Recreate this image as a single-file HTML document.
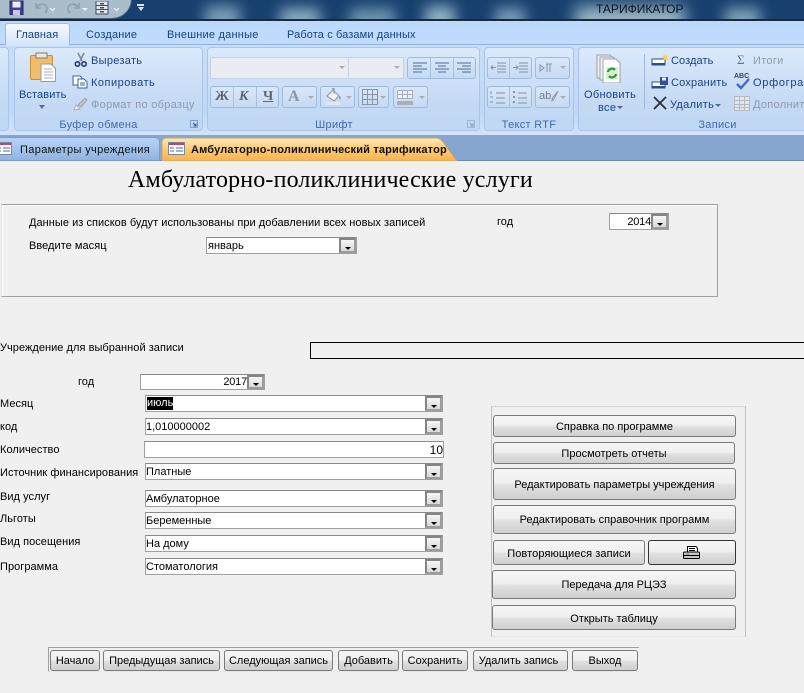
<!DOCTYPE html>
<html><head><meta charset="utf-8"><style>
html,body{margin:0;padding:0}
body{width:804px;height:693px;overflow:hidden;position:relative;background:#f0f0f0;font-family:"Liberation Sans",sans-serif;font-size:11px;color:#000}
div,span.a,svg{position:absolute}
.t{white-space:nowrap;line-height:14px;height:14px}
.r{color:#15428b;font-size:11px;letter-spacing:.3px}
.d{color:#a0a8b5}
.g{top:47px;height:84px;border:1px solid #a9c6ea;border-radius:4px;box-sizing:border-box;background:linear-gradient(#dbe9fb,#c4d9f4 70%,#c4d9f4);overflow:hidden}
.g:after{content:"";position:absolute;left:0;right:0;bottom:0;height:15px;background:#c1d8f4}
.gl{top:118px;text-align:center;color:#3e6aaa;font-size:11px;line-height:14px;letter-spacing:.3px}
.f{font-size:11px;letter-spacing:.04px}
.c{background:#fff;border:1px solid #a0a0a0;border-top-color:#8a8a8a;box-sizing:border-box}
.c .b,.b{position:absolute;box-sizing:border-box;background:linear-gradient(#f6f6f6,#d8d8d8);border:2px solid #9c9c9c;border-top-color:#858585;border-left-color:#858585}
.b:after{content:"";position:absolute;left:50%;top:50%;margin:1px 0 0 -3px;border:3px solid transparent;border-top:3px solid #000;border-bottom:0}
.c .v{position:absolute;left:0;top:1px;white-space:nowrap;line-height:14px;font-size:11px}
.p{box-sizing:border-box;border:1px solid #7a7a7a;border-radius:3px;background:linear-gradient(#f5f5f5,#f0f0f0 45%,#e0e0e0 55%,#cfcfcf);text-align:center;font-size:11px;white-space:nowrap}
.tb{box-sizing:border-box;height:27px;top:80px;border:1px solid #9fbbdc;border-radius:3px;background:linear-gradient(#d9e7f9,#c6daf5)}
</style></head><body>

<!-- title bar -->
<div style="left:0;top:0;width:804px;height:20px;background:#17406f;overflow:hidden">
 <div style="left:205px;top:6px;width:35px;height:30px;background:#7a9db8;filter:blur(7px)"></div>
 <div style="left:280px;top:8px;width:40px;height:28px;background:#8aabc0;filter:blur(7px)"></div>
 <div style="left:350px;top:8px;width:45px;height:28px;background:#6d95ae;filter:blur(7px)"></div>
 <div style="left:425px;top:6px;width:30px;height:28px;background:#92b3c2;filter:blur(7px)"></div>
 <div style="left:495px;top:8px;width:30px;height:28px;background:#7a9db8;filter:blur(7px)"></div>
 <div style="left:575px;top:6px;width:110px;height:30px;background:#9ab7c4;filter:blur(8px)"></div>
 <div style="left:725px;top:8px;width:35px;height:28px;background:#80a3b8;filter:blur(7px)"></div>
 <div style="left:-10px;top:-8px;width:140px;height:25px;border-radius:0 0 20px 0;background:#a9bdcb;border:1px solid #45617f"></div>
 <svg style="left:9px;top:0" width="15" height="15" viewBox="0 0 15 15"><rect x="1" y="1" width="13" height="14" fill="#3b3f99" stroke="#22255f"/><rect x="3.500" y="1.500" width="8" height="6" fill="#e9edf5"/><rect x="4" y="10" width="7" height="5" fill="#c6c9dd"/></svg>
 <svg style="left:33px;top:1px" width="95" height="14" viewBox="0 0 95 14" fill="none"><path d="M4 6C8 1 14 3 14 8c0 2-1 3-2 4" stroke="#8ea2b4" stroke-width="1.800"/><path d="M3 2v5h5" stroke="#8ea2b4" stroke-width="1.500"/><path d="M17 7l2.500 2.500L22 7" stroke="#eef2f5" stroke-width="1.200"/><path d="M45 6C41 1 35 3 35 8c0 2 1 3 2 4" stroke="#8ea2b4" stroke-width="1.800"/><path d="M46 2v5h-5" stroke="#8ea2b4" stroke-width="1.500"/><path d="M49 7h6l-3 3z" fill="#eef2f5"/><rect x="63" y="0" width="12" height="13" fill="#dfe5ea" stroke="#3d4f66"/><path d="M63 4.500h12M63 8.500h12" stroke="#3d4f66"/><rect x="67" y="2" width="4" height="1.500" fill="#3d4f66"/><rect x="67" y="6" width="4" height="1.500" fill="#3d4f66"/><rect x="67" y="10" width="4" height="1.500" fill="#3d4f66"/><path d="M81 7l2.500 2.500L86 7" stroke="#eef2f5" stroke-width="1.200"/></svg>
 <div style="left:137px;top:4px;width:7px;height:2px;background:#dce6f0"></div>
 <div style="left:138px;top:7px;border:3px solid transparent;border-top:4px solid #dce6f0;border-bottom:0"></div>
 <div class="t" style="left:596px;top:2px;font-size:12px;color:#0c1420">ТАРИФИКАТОР</div>
</div>
<div style="left:0;top:19px;width:804px;height:2px;background:#1a2a3e"></div>

<!-- ribbon -->
<div style="left:0;top:21px;width:804px;height:23px;background:linear-gradient(#bcd9fc,#c0dbfd)"></div>
<div style="left:0;top:44px;width:804px;height:91px;background:linear-gradient(#c9def8,#c0d8f6 75%,#d2e3f8);border-top:1px solid #8db2e3;box-sizing:border-box"></div>
<div style="left:5px;top:23px;width:65px;height:23px;box-sizing:border-box;border:1px solid #9cbde6;border-bottom:0;border-radius:3px 3px 0 0;background:linear-gradient(#f5f9ff,#d3e4fa)"></div>
<div class="t r" style="left:16px;top:28px;letter-spacing:.05px">Главная</div>
<div class="t r" style="left:86px;top:28px;letter-spacing:.2px">Создание</div>
<div class="t r" style="left:167px;top:28px;letter-spacing:.22px">Внешние данные</div>
<div class="t r" style="left:287px;top:28px;letter-spacing:.12px">Работа с базами данных</div>

<div class="g" style="left:-6px;width:15px"></div>
<div class="g" style="left:14px;width:189px"></div>
<div class="g" style="left:207px;width:273px"></div>
<div class="g" style="left:484px;width:90px"></div>
<div class="g" style="left:578px;width:240px"></div>

<!-- clipboard -->
<svg style="left:29px;top:51px" width="28" height="32" viewBox="0 0 28 32"><rect x="1.500" y="4.500" width="22" height="24" rx="1.500" fill="#f2bd6d" stroke="#c58f3f"/><rect x="7" y="2" width="11" height="5" fill="#e9e9e9" stroke="#8b7a58"/><path d="M12 30.500V13h10l4.500 4.500v13z" fill="#fff" stroke="#9a9a9a"/><path d="M15 18h8M15 21h9M15 24h9M15 27h9" stroke="#a8b0bc"/></svg>
<div class="t r" style="left:19px;top:88px;letter-spacing:.1px">Вставить</div>
<div style="left:39px;top:105px;border:3px solid transparent;border-top:4px solid #55708f;border-bottom:0"></div>
<svg style="left:74px;top:52px" width="14" height="15" viewBox="0 0 14 15" fill="none"><path d="M4 1l4 8M10 1L6 9" stroke="#7f8b99" stroke-width="1.600"/><circle cx="3.500" cy="12" r="2.200" stroke="#223a70" stroke-width="1.600"/><circle cx="10" cy="12" r="2.200" stroke="#223a70" stroke-width="1.600"/></svg>
<div class="t r" style="left:91px;top:54px">Вырезать</div>
<svg style="left:72px;top:75px" width="16" height="14" viewBox="0 0 16 14"><path d="M1 1h7l2 2v7H1z" fill="#fff" stroke="#3d6299"/><path d="M6 4h6l3 3v6H6z" fill="#fff" stroke="#3d6299"/><path d="M8 8h5M8 10h5" stroke="#3d6299"/></svg>
<div class="t r" style="left:91px;top:76px;letter-spacing:.5px">Копировать</div>
<svg style="left:73px;top:96px" width="16" height="16" viewBox="0 0 16 16"><path d="M1 14l2-5 4 4z" fill="#f0f2f4" stroke="#aab0b8"/><path d="M5 9l7-7 2 2-6 7z" fill="#c3c6c8" stroke="#9da3a8"/></svg>
<div class="t d" style="left:91px;top:98px;letter-spacing:.3px;color:#8f9bab">Формат по образцу</div>
<div class="t gl" style="left:14px;width:169px">Буфер обмена</div>
<svg style="left:190px;top:120px" width="8" height="8" viewBox="0 0 8 8" fill="none"><rect x=".5" y=".5" width="7" height="7" stroke="#7f9fc8"/><path d="M3 3l3 3M6 3.500V6H3.500" stroke="#2f5588"/></svg>

<!-- font -->
<div style="left:210px;top:57px;width:139px;height:22px;box-sizing:border-box;background:#e9edf2;border:1px solid #c2d3e9"></div>
<div style="left:349px;top:57px;width:55px;height:22px;box-sizing:border-box;background:#e9edf2;border:1px solid #c2d3e9;border-left:0"></div>
<div style="left:339px;top:66px;border:3px solid transparent;border-top:3px solid #a9adb3;border-bottom:0"></div>
<div style="left:394px;top:66px;border:3px solid transparent;border-top:3px solid #a9adb3;border-bottom:0"></div>
<div class="tb" style="left:407px;top:57px;width:69px;height:22px"></div>
<svg style="left:407px;top:57px" width="69" height="22" viewBox="0 0 69 22" fill="none" stroke="#4a6d9b"><path d="M23.500 1v20M46.500 1v20" stroke="#a9c1df"/><path d="M6 6h14M6 9h9M6 12h14M6 15h9"/><path d="M28 6h14M31 9h8M28 12h14M31 15h8"/><path d="M50 6h14M55 9h9M50 12h14M55 15h9"/></svg>
<div class="tb" style="left:210px;top:86px;width:69px;height:22px"></div>
<svg style="left:210px;top:86px" width="69" height="22" viewBox="0 0 69 22" fill="none"><path d="M23.500 1v20M46.500 1v20" stroke="#a9c1df"/></svg>
<div class="t" style="left:215px;top:89px;font:bold 14px/16px 'Liberation Serif',serif;color:#5e6875">Ж</div>
<div class="t" style="left:239px;top:89px;font:italic bold 14px/16px 'Liberation Serif',serif;color:#5e6875">К</div>
<div class="t" style="left:263px;top:89px;font:bold 14px/16px 'Liberation Serif',serif;color:#5e6875;text-decoration:underline">Ч</div>
<div class="tb" style="left:282px;top:86px;width:35px;height:22px"></div>
<div class="t" style="left:288px;top:88px;font:bold 16px/17px 'Liberation Serif',serif;color:#8b96a3">А</div>
<div style="left:308px;top:96px;border:3px solid transparent;border-top:3px solid #a9adb3;border-bottom:0"></div>
<div class="tb" style="left:320px;top:86px;width:35px;height:22px"></div>
<svg style="left:325px;top:88px" width="17" height="18" viewBox="0 0 17 18"><path d="M2 8l6-6 6 6-5 5z" fill="#eef2f6" stroke="#8b96a3"/><path d="M7 1l2-1v6" stroke="#8b96a3" fill="none"/><path d="M14 7l2 3-1 2-1-2z" fill="#8b96a3"/><rect x="0" y="14" width="15" height="3" fill="#dfe7f2"/></svg>
<div style="left:346px;top:96px;border:3px solid transparent;border-top:3px solid #a9adb3;border-bottom:0"></div>
<div class="tb" style="left:358px;top:86px;width:31px;height:22px"></div>
<svg style="left:362px;top:89px" width="16" height="16" viewBox="0 0 16 16" fill="none" stroke="#8994a3"><rect x=".5" y=".5" width="15" height="15"/><path d="M5.500 0v16M10.500 0v16M0 5.500h16M0 10.500h16"/></svg>
<div style="left:380px;top:96px;border:3px solid transparent;border-top:3px solid #a9adb3;border-bottom:0"></div>
<div class="tb" style="left:393px;top:86px;width:35px;height:22px"></div>
<svg style="left:397px;top:90px" width="16" height="15" viewBox="0 0 16 15" fill="none" stroke="#a5aeba"><rect x=".5" y=".5" width="15" height="8" fill="#eef2f7"/><path d="M0 4.500h16M5.500 0v8M10.500 0v8"/><rect x="0" y="11" width="16" height="4" fill="#a9afb7" stroke="none"/></svg>
<div style="left:419px;top:96px;border:3px solid transparent;border-top:3px solid #a9adb3;border-bottom:0"></div>
<div class="t gl" style="left:207px;width:254px">Шрифт</div>
<svg style="left:467px;top:120px" width="8" height="8" viewBox="0 0 8 8" fill="none"><rect x=".5" y=".5" width="7" height="7" stroke="#9fb7d4"/><path d="M3 3l3 3M6 3.500V6H3.500" stroke="#8a9db8"/></svg>

<!-- rtf -->
<div class="tb" style="left:487px;top:57px;width:45px;height:22px"></div>
<div class="tb" style="left:535px;top:57px;width:35px;height:22px"></div>
<div class="tb" style="left:487px;top:86px;width:45px;height:22px"></div>
<div class="tb" style="left:535px;top:86px;width:35px;height:22px"></div>
<svg style="left:487px;top:57px" width="84" height="51" viewBox="0 0 84 51" fill="none" stroke="#7f93ad"><path d="M22.500 1v20M22.500 30v20" stroke="#a9c1df"/><path d="M10 6h9M10 9h9M10 12h9M10 15h9M4 10.500h5M6 8.500l-2 2 2 2" /><path d="M32 6h9M32 9h9M32 12h9M32 15h9M26 10.500h5M29 8.500l2 2-2 2"/><path d="M9 36h9M9 41h9M9 46h9M4 34v3M3 40h3M3 45h3"/><path d="M31 36h9M31 41h9M31 46h9"/><path d="M26 35h2M26 40h2M26 45h2" stroke-width="2"/><path d="M53 8l4 3-4 3zM60 7v8M63 7v8M59 7h6"/></svg>
<div style="left:560px;top:66px;border:3px solid transparent;border-top:3px solid #a9adb3;border-bottom:0"></div>
<div class="t" style="left:539px;top:89px;font-size:11px;color:#6d8098">ab</div>
<svg style="left:551px;top:90px" width="8" height="12" viewBox="0 0 8 12" fill="none"><path d="M7 1L3 9l-2 2 .500-3z" stroke="#8b96a3"/></svg>
<div style="left:560px;top:96px;border:3px solid transparent;border-top:3px solid #a9adb3;border-bottom:0"></div>
<div class="t gl" style="left:484px;width:90px">Текст RTF</div>

<!-- records -->
<svg style="left:596px;top:53px" width="30" height="30" viewBox="0 0 30 30"><path d="M1 2h13l3 3v20H1z" fill="#eef1f5" stroke="#9a9fa8"/><path d="M4 4h13l3 3v20H4z" fill="#f2f4f7" stroke="#9a9fa8"/><path d="M7 6h13l4 4v20H7z" fill="#fff" stroke="#9a9fa8"/><rect x="10" y="14" width="12" height="12" fill="#d8f0cf"/><path d="M12 19a4 4 0 0 1 7-2M20 21a4 4 0 0 1-7 2" stroke="#2b9a2b" stroke-width="2.200" fill="none"/></svg>
<div class="t r" style="left:584px;top:88px">Обновить</div>
<div class="t r" style="left:598px;top:101px">все</div>
<div style="left:617px;top:106px;border:3px solid transparent;border-top:3px solid #4a6a95;border-bottom:0"></div>
<div style="left:644px;top:54px;width:1px;height:55px;background:#9fbcdf"></div>
<svg style="left:651px;top:53px" width="18" height="14" viewBox="0 0 18 14"><rect x="1" y="6" width="13" height="6" fill="#fff" stroke="#2d4f86"/><rect x="1" y="10" width="13" height="2" fill="#2d4f86"/><path d="M13 1l1.500 2 2.500-1-1 2.500L17 7l-2.500-.5L13 8l-.5-2.500L10 5l2-1z" fill="#f6d24a"/></svg>
<div class="t r" style="left:671px;top:54px;letter-spacing:.1px">Создать</div>
<svg style="left:651px;top:76px" width="18" height="14" viewBox="0 0 18 14"><rect x="1" y="6" width="13" height="6" fill="#fff" stroke="#2d4f86"/><rect x="1" y="10" width="13" height="2" fill="#2d4f86"/><rect x="9" y="1" width="8" height="8" fill="#38508f"/><rect x="11" y="1.500" width="4" height="3" fill="#e4e9f2"/></svg>
<div class="t r" style="left:671px;top:76px;letter-spacing:.2px">Сохранить</div>
<svg style="left:653px;top:96px" width="14" height="14" viewBox="0 0 14 14"><path d="M1 1l12 12M13 1L1 13" stroke="#2b2f36" stroke-width="1.800"/></svg>
<div class="t r" style="left:670px;top:98px">Удалить</div>
<div style="left:715px;top:104px;border:3px solid transparent;border-top:3px solid #4a6a95;border-bottom:0"></div>
<div class="t" style="left:737px;top:52px;font:13px/16px 'Liberation Serif',serif;color:#5f738f">Σ</div>
<div class="t" style="left:753px;top:54px;color:#8f9bab;letter-spacing:.3px">Итоги</div>
<div class="t" style="left:734px;top:73px;font:bold 7px/8px 'Liberation Sans',sans-serif;color:#33435f">ABC</div>
<svg style="left:735px;top:78px" width="16" height="12" viewBox="0 0 16 12" fill="none"><path d="M2 6l4 4 8-9" stroke="#3d6fc0" stroke-width="2.400"/></svg>
<div class="t r" style="left:753px;top:76px;letter-spacing:.7px">Орфогра</div>
<svg style="left:734px;top:96px" width="16" height="15" viewBox="0 0 16 15" fill="none" stroke="#b3bac4"><rect x=".5" y=".5" width="15" height="14" fill="#e3e7ec"/><path d="M0 4.500h16M0 8.500h16M0 11.500h16M5.500 0v15M10.500 0v15"/></svg>
<div class="t" style="left:753px;top:98px;color:#8f9bab;letter-spacing:.3px">Дополнит</div>
<div class="t gl" style="left:578px;width:279px">Записи</div>

<!-- doc tabs -->
<div style="left:0;top:135px;width:804px;height:26px;background:#86a6cf;border-bottom:1px solid #6c8ab5;box-sizing:border-box"></div>
<div style="left:-5px;top:137px;width:165px;height:24px;box-sizing:border-box;background:linear-gradient(#b7d3f7,#8fb3e2);border:1px solid #7a9cc9;border-radius:0 5px 0 0"></div>
<svg style="left:-5px;top:142px" width="17" height="14" viewBox="0 0 17 14"><rect x=".5" y=".5" width="16" height="12" fill="#fff" stroke="#7d8797"/><rect x="1" y="1" width="15" height="2" fill="#b04b7b"/><path d="M8 6h7M8 9h7M2 6h4M2 9h4" stroke="#3f6ea8"/></svg>
<div class="t" style="left:20px;top:143px;font-size:11px;color:#111;letter-spacing:.35px">Параметры учреждения</div>
<svg style="left:161px;top:136px" width="300" height="25" viewBox="0 0 300 25"><defs><linearGradient id="o" x1="0" y1="0" x2="0" y2="1"><stop offset="0" stop-color="#ffe9b8"/><stop offset=".5" stop-color="#fdc972"/><stop offset="1" stop-color="#fbb24e"/></linearGradient></defs><path d="M1 25V6Q1 2 6 2H275Q279 2 282 6L296 25Z" fill="url(#o)" stroke="#c9a566"/></svg>
<svg style="left:168px;top:142px" width="17" height="14" viewBox="0 0 17 14"><rect x=".5" y=".5" width="16" height="12" fill="#fff" stroke="#7d8797"/><rect x="1" y="1" width="15" height="2" fill="#b04b7b"/><path d="M8 6h7M8 9h7M2 6h4M2 9h4" stroke="#3f6ea8"/></svg>
<div class="t" style="left:191px;top:143px;font-size:11px;font-weight:bold;color:#111;letter-spacing:.17px">Амбулаторно-поликлинический тарификатор</div>

<!-- title -->
<div class="t" style="left:128px;top:167px;height:26px;font:24px/26px 'Liberation Serif',serif;letter-spacing:.15px">Амбулаторно-поликлинические услуги</div>

<!-- top panel -->
<div style="left:1px;top:204px;width:717px;height:93px;box-sizing:border-box;border:1px solid #a0a0a0;border-left-color:#e2e2e2;box-shadow:inset 1px 1px 0 #fff"></div>
<div class="t f" style="left:29px;top:216px">Данные из списков будут использованы при добавлении всех новых записей</div>
<div class="t f" style="left:29px;top:239px">Введите масяц</div>
<div class="c" style="left:206px;top:237px;width:151px;height:17px"><span class="v" style="left:1px">январь</span><span class="b" style="right:0;top:0;width:17px;height:15px"></span></div>
<div class="t f" style="left:497px;top:215px">год</div>
<div class="c" style="left:609px;top:213px;width:60px;height:17px"><span class="v" style="left:auto;right:17px;letter-spacing:-.2px">2014</span><span class="b" style="right:0;top:0;width:17px;height:15px"></span></div>

<div class="t f" style="left:0;top:341px">Учреждение для выбранной записи</div>
<div style="left:310px;top:342px;width:500px;height:17px;box-sizing:border-box;border:1px solid #000;background:#f0f0f0"></div>

<!-- form -->
<div class="t f" style="left:78px;top:375px">год</div>
<div class="c" style="left:140px;top:374px;width:125px;height:16px"><span class="v" style="left:auto;right:17px;top:0;letter-spacing:-.2px">2017</span><span class="b" style="right:0;top:0;width:17px;height:14px"></span></div>

<div class="t f" style="left:0;top:397px">Месяц</div>
<div class="c" style="left:145px;top:395px;width:298px;height:17px"><span class="v" style="left:1px;background:#000;color:#fff;line-height:13px;top:1px">июль</span><span class="b" style="right:0;top:0;width:17px;height:15px"></span></div>
<div class="t f" style="left:0;top:420px">код</div>
<div class="c" style="left:145px;top:418px;width:298px;height:17px"><span class="v">1,010000002</span><span class="b" style="right:0;top:0;width:17px;height:15px"></span></div>
<div class="t f" style="left:0;top:443px">Количество</div>
<div class="c" style="left:144px;top:441px;width:300px;height:17px"><span class="v" style="left:auto;right:0;font-size:12px">10</span></div>
<div class="t f" style="left:0;top:466px">Источник финансирования</div>
<div class="c" style="left:145px;top:463px;width:298px;height:17px"><span class="v">Платные</span><span class="b" style="right:0;top:0;width:17px;height:15px"></span></div>
<div class="t f" style="left:0;top:490px">Вид услуг</div>
<div class="c" style="left:145px;top:490px;width:298px;height:17px"><span class="v">Амбулаторное</span><span class="b" style="right:0;top:0;width:17px;height:15px"></span></div>
<div class="t f" style="left:0;top:512px">Льготы</div>
<div class="c" style="left:145px;top:512px;width:298px;height:17px"><span class="v">Беременные</span><span class="b" style="right:0;top:0;width:17px;height:15px"></span></div>
<div class="t f" style="left:0;top:535px">Вид посещения</div>
<div class="c" style="left:145px;top:535px;width:298px;height:17px"><span class="v">На дому</span><span class="b" style="right:0;top:0;width:17px;height:15px"></span></div>
<div class="t f" style="left:0;top:560px">Программа</div>
<div class="c" style="left:145px;top:558px;width:298px;height:17px"><span class="v">Стоматология</span><span class="b" style="right:0;top:0;width:17px;height:15px"></span></div>

<!-- buttons panel -->
<div style="left:491px;top:406px;width:255px;height:231px;box-sizing:border-box;border:1px solid #c0c0c0;border-bottom-color:#e6e6e6;border-top-color:#d4d4d4"></div>
<div class="p" style="left:493px;top:415px;width:243px;height:22px;line-height:22px">Справка по программе</div>
<div class="p" style="left:493px;top:442px;width:242px;height:22px;line-height:22px">Просмотреть отчеты</div>
<div class="p" style="left:493px;top:468px;width:243px;height:32px;line-height:32px">Редактировать параметры учреждения</div>
<div class="p" style="left:493px;top:505px;width:243px;height:29px;line-height:29px">Редактировать справочник программ</div>
<div class="p" style="left:493px;top:540px;width:152px;height:25px;line-height:26px;letter-spacing:.1px">Повторяющиеся записи</div>
<div class="p" style="left:648px;top:540px;width:88px;height:25px;border-color:#333"></div>
<svg style="left:683px;top:546px" width="17" height="14" viewBox="0 0 17 14" fill="none"><path d="M4.500.5H13l1.500 2V6h-10z" fill="#fff" stroke="#000"/><rect x=".5" y="6" width="16" height="6.500" rx="1" fill="#c8c8c8" stroke="#000"/><path d="M1 9.500h15" stroke="#000"/><rect x="3" y="7.500" width="3" height="1" fill="#7a9a40"/><path d="M6 2.500h6M6 4.500h6" stroke="#000"/></svg>
<div class="p" style="left:492px;top:570px;width:244px;height:29px;line-height:29px">Передача для РЦЭЗ</div>
<div class="p" style="left:492px;top:605px;width:244px;height:25px;line-height:26px">Открыть таблицу</div>

<!-- bottom bar -->
<div style="left:48px;top:647px;width:591px;height:25px;box-sizing:border-box;border-top:1px solid #a0a0a0;border-left:1px solid #a0a0a0;border-bottom:1px solid #e8e8e8"></div>
<div class="p" style="left:50px;top:650px;width:50px;height:21px;line-height:20px">Начало</div>
<div class="p" style="left:103px;top:650px;width:117px;height:21px;line-height:20px">Предыдущая запись</div>
<div class="p" style="left:224px;top:650px;width:109px;height:21px;line-height:20px">Следующая запись</div>
<div class="p" style="left:338px;top:650px;width:61px;height:21px;line-height:20px">Добавить</div>
<div class="p" style="left:402px;top:650px;width:66px;height:21px;line-height:20px">Сохранить</div>
<div class="p" style="left:473px;top:650px;width:95px;height:21px;line-height:20px;padding-right:4px">Удалить запись</div>
<div class="p" style="left:572px;top:650px;width:66px;height:21px;line-height:20px">Выход</div>
</body></html>
